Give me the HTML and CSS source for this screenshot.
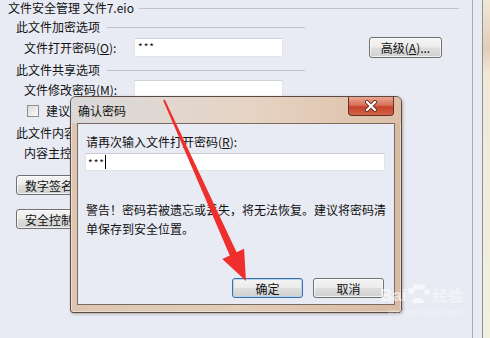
FILE: index.html
```html
<!DOCTYPE html>
<html>
  <head>
    <meta charset="utf-8">
    <title>文件安全管理</title>
    <link rel="stylesheet" href="styles.css">
  </head>
  <body>
    <div class="page">
      <div class="main">
        <div class="group-title top"><span>文件安全管理 文件7.eio</span><i class="rule"></i></div>
        <div class="group-title sub first"><span>此文件加密选项</span><i class="rule"></i></div>
        <div class="field-row open-row">
          <span class="label">文件打开密码(<u>O</u>):</span>
          <div class="textbox">***</div>
          <button class="btn adv">高级(<u>A</u>)...</button>
        </div>
        <div class="group-title sub share"><span>此文件共享选项</span><i class="rule"></i></div>
        <div class="field-row modify-row">
          <span class="label">文件修改密码(<u>M</u>):</span>
          <div class="textbox"></div>
        </div>
        <div class="check-row">
          <span class="checkbox"></span>
          <span>建议以只读方式打开</span>
        </div>
        <div class="plain sub-head">此文件内容控制</div>
        <div class="plain indent">内容主控制</div>
        <button class="btn side sign">数字签名...</button>
        <button class="btn side secure">安全控制...</button>
      </div>
      <div class="edge"></div>
    </div>

    <div class="dialog">
      <div class="dialog-title">
        <span class="caption">确认密码</span>
        <button class="close-btn">
          <svg width="16" height="12" viewBox="0 0 16 12">
            <path d="M4 2 L12 10 M12 2 L4 10" stroke="#6b2a1c" stroke-width="4" stroke-linecap="round"/>
            <path d="M4 2 L12 10 M12 2 L4 10" stroke="#fff" stroke-width="2.4" stroke-linecap="round"/>
          </svg>
        </button>
      </div>
      <div class="dialog-body">
        <div class="prompt">请再次输入文件打开密码(<u>R</u>):</div>
        <div class="textbox wide">***<span class="caret"></span></div>
        <p class="warning">警告！密码若被遗忘或丢失，将无法恢复。建议将密码清单保存到安全位置。</p>
        <div class="dialog-buttons">
          <button class="btn default">确定</button>
          <button class="btn">取消</button>
        </div>
      </div>
    </div>

    <svg class="arrow" width="490" height="338" viewBox="0 0 490 338">
      <polygon points="163.2,100.4 164.8,99.6 236.6,252.2 244.1,248.7 246,281 222.3,258.9 229.8,255.4" fill="#ee2f2c"/>
    </svg>

    <div class="watermark">
      <div class="mark-top">
        <span class="bai">Bai</span>
        <svg width="24" height="22" viewBox="0 0 24 22">
          <circle cx="5" cy="7" r="3" fill="#fff"/>
          <circle cx="10" cy="3" r="3" fill="#fff"/>
          <circle cx="16" cy="3" r="3" fill="#fff"/>
          <circle cx="21" cy="8" r="3" fill="#fff"/>
          <path d="M6 19 C6 12 18 12 18 19 Z" fill="#fff"/>
        </svg>
        <span class="jy">经验</span>
      </div>
      <div class="mark-url">jingyan.baidu.com</div>
    </div>
  </body>
</html>
```

FILE: styles.css
```css
body {
  margin: 0;
  background: #e9ebf4;
  font-family: "Noto Sans CJK SC", "Noto Sans", sans-serif;
  font-size: 12px;
  color: #111;
  overflow: hidden;
}

u { text-decoration: underline; text-underline-offset: 1px; }

.page { display: flex; height: 338px; }

.main {
  width: 473px;
  flex: none;
  box-sizing: border-box;
  border-right: 1px solid #a9acb6;
  padding-left: 8px;
}

.edge {
  flex: 1;
  margin-left: 9px;
  border-left: 1px solid #8f9098;
  background: linear-gradient(180deg, #efe9d6 0, #e2cdb8 14%, #efe9d6 22%, #f3efde 100%);
}

/* group headers with the etched line */
.group-title { display: flex; align-items: center; line-height: 16px; }
.group-title .rule { flex: 1; height: 0; border-top: 1px solid #c0c3cd; margin-left: 5px; }
.group-title.top { margin-right: 13px; }
.group-title.sub { margin-left: 8px; width: 289px; }
.group-title.sub .rule { margin-left: 7px; }
.group-title.first { margin-top: 3px; }
.group-title.share { margin-top: 5px; }

.field-row { display: flex; align-items: center; margin-left: 16px; }
.field-row .label { width: 110px; }
.open-row { margin-top: 2px; height: 20px; }
.modify-row { margin-top: 2px; height: 18px; }

.textbox {
  box-sizing: border-box;
  width: 149px;
  height: 19px;
  background: #fff;
  border: 1px solid #e3e5ec;
  border-top-color: #cfd2da;
  font-size: 10px;
  line-height: 15px;
  padding-left: 3px;
  letter-spacing: 1px;
}
.modify-row .textbox { height: 18px; }

.btn {
  box-sizing: border-box;
  height: 20px;
  width: 71px;
  padding: 0;
  font-family: inherit;
  font-size: 12px;
  color: #111;
  border: 1px solid #707070;
  border-radius: 3px;
  background: linear-gradient(180deg, #f4f4f4 0, #ececec 48%, #dedede 52%, #d0d0d0 100%);
  box-shadow: inset 0 0 0 1px rgba(255, 255, 255, 0.7);
}
.btn.adv { margin-left: auto; margin-right: 30px; width: 73px; height: 21px; }

.check-row { display: flex; align-items: center; margin: 5px 0 0 19px; line-height: 16px; }
.checkbox {
  box-sizing: border-box;
  width: 12px;
  height: 12px;
  margin-right: 7px;
  border: 1px solid #8e8f8f;
  background: linear-gradient(135deg, #dcdcdc, #fafafa);
}

.plain { line-height: 16px; }
.sub-head { margin: 6px 0 0 8px; }
.indent { margin: 4px 0 0 16px; }

.btn.side { display: block; margin-left: 8px; width: 80px; text-align: left; padding-left: 8px; }
.btn.sign { margin-top: 14px; }
.btn.secure { margin-top: 14px; }

/* confirm dialog */
.dialog {
  position: absolute;
  left: 70px;
  top: 96px;
  width: 332px;
  height: 217px;
  box-sizing: border-box;
  border: 1px solid #5a4a41;
  border-radius: 6px 6px 3px 3px;
  background: linear-gradient(90deg, #dcc6b3 0, #e2cdbb 50%, #d7bba3 100%);
  padding: 0 6px 7px;
  display: flex;
  flex-direction: column;
  box-shadow: 1px 1px 3px rgba(60, 40, 30, 0.35), inset 0 0 0 1px rgba(255, 255, 255, 0.4);
}

.dialog-title {
  height: 26px;
  margin: 0 -6px;
  padding: 0 6px;
  display: flex;
  align-items: center;
  border-radius: 5px 5px 0 0;
  background: linear-gradient(90deg, #d9d8da 0, #e0d8d2 25%, #e6d3c3 55%, #dcbfa6 100%);
}
.caption { padding-left: 1px; font-size: 12px; margin-top: 1px; }

.close-btn {
  align-self: flex-start;
  margin-left: auto;
  margin-right: 1px;
  width: 46px;
  height: 19px;
  padding: 0;
  border: 1px solid #6a2f22;
  border-top: none;
  border-radius: 0 0 4px 4px;
  background: linear-gradient(180deg, #eaa694 0, #d9705a 45%, #c5412a 55%, #d4644a 100%);
  display: flex;
  align-items: center;
  justify-content: center;
}

.dialog-body {
  flex: 1;
  border: 1px solid #7b6a60;
  background: #e9ebf4;
  padding: 10px 10px 6px 7px;
  display: flex;
  flex-direction: column;
}

.prompt { line-height: 16px; padding-left: 1px; }

.textbox.wide {
  width: 300px;
  height: 18px;
  margin-top: 3px;
  border-color: #e1e3ea;
  border-top-color: #c9ccd5;
  display: flex;
  align-items: center;
  padding-left: 2px;
}
.caret { width: 1px; height: 14px; background: #000; }

.warning { margin: 29px -10px 0 1px; line-height: 19px; }

.dialog-buttons { margin-top: auto; display: flex; justify-content: flex-end; gap: 10px; }
.btn.default {
  border-color: #3c6fa8;
  box-shadow: inset 0 0 0 1px #b6d5ee;
}

.arrow { position: absolute; left: 0; top: 0; pointer-events: none; }

.watermark {
  position: absolute;
  left: 380px;
  top: 284px;
  color: #fff;
  opacity: 0.6;
  font-family: "Liberation Sans", "Noto Sans CJK SC", sans-serif;
}
.mark-top { display: flex; align-items: flex-end; line-height: 20px; }
.bai { font-size: 17px; font-weight: bold; }
.jy { font-size: 15px; margin-left: 2px; }
.mark-url { font-size: 9px; margin: 1px 0 0 8px; opacity: 0.7; }
```
